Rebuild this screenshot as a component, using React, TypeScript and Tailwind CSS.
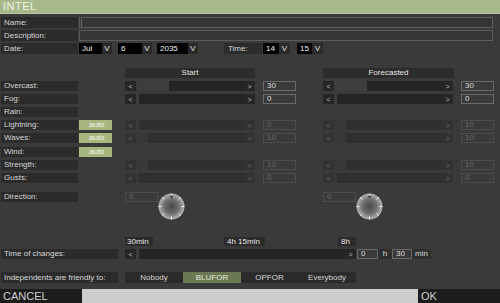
import React from "react";

const FONT = { fontFamily: '"Liberation Sans", Arial, sans-serif' };

function Label({ children, w = "w-[77px]" }: { children: React.ReactNode; w?: string }) {
  return (
    <div className={`${w} ml-[1px] h-full bg-[#2b2b2b] text-[#d6d6d6] pl-[3px] flex items-center text-[8px] leading-none`}>
      {children}
    </div>
  );
}

function Btn({ children, dim }: { children: React.ReactNode; dim?: boolean }) {
  return (
    <div
      className={`w-[11px] h-full flex items-center justify-center text-[7px] leading-none ${
        dim ? "bg-[#323232] text-[#6e6e6e]" : "bg-[#262626] text-[#b8b8b8]"
      }`}
    >
      {children}
    </div>
  );
}

function Track({ value, dim, w = 107 }: { value: number; dim?: boolean; w?: number }) {
  const fill = Math.max(2, Math.round((value / 100) * w));
  return (
    <div className={`ml-[1px] h-full flex ${dim ? "bg-[#2f2f2f]" : "bg-[#242424]"}`} style={{ width: w }}>
      <div className={`h-full ${dim ? "bg-[#383838]" : "bg-[#3e3e3e]"}`} style={{ width: fill }} />
    </div>
  );
}

function ValBox({ v, dim, ml }: { v: string; dim?: boolean; ml: string }) {
  return (
    <div
      className={`${ml} w-[33px] h-full border flex items-center pl-[3px] text-[8px] leading-none ${
        dim ? "border-[#4c4c4c] text-[#6a6a6a]" : "border-[#6a6a6a] text-[#dcdcdc]"
      }`}
    >
      {v}
    </div>
  );
}

function Slider({ value, dim }: { value: number; dim?: boolean }) {
  return (
    <div className="flex h-full">
      <Btn dim={dim}>&lt;</Btn>
      <Track value={value} dim={dim} />
      <Btn dim={dim}>&gt;</Btn>
    </div>
  );
}

function WeatherRow({
  label,
  auto,
  s,
  f,
  dim,
  mt = "mt-[3px]",
}: {
  label: string;
  auto?: boolean;
  s?: number;
  f?: number;
  dim?: boolean;
  mt?: string;
}) {
  return (
    <div className={`flex h-[10px] ${mt}`}>
      <div className="w-[125px] flex h-full">
        <Label>{label}</Label>
        {auto && (
          <div className="ml-[1px] w-[33px] h-full bg-[#a7b67e] text-[#f4f7ec] flex items-center pl-[10px] text-[8px] leading-none">
            auto
          </div>
        )}
      </div>
      {s !== undefined && f !== undefined && (
        <>
          <Slider value={s} dim={dim} />
          <ValBox v={String(s)} dim={dim} ml="ml-[8px]" />
          <div className="ml-[27px] h-full">
            <Slider value={f} dim={dim} />
          </div>
          <ValBox v={String(f)} dim={dim} ml="ml-[8px]" />
        </>
      )}
    </div>
  );
}

function Combo({ v, bw, vw, ml }: { v: string; bw: string; vw: string; ml: string }) {
  return (
    <div className={`${ml} flex h-full`}>
      <div className={`${bw} h-full bg-black text-[#f0f0f0] flex items-center pl-[3px] text-[8px] leading-none`}>{v}</div>
      <div className={`${vw} h-full bg-[#2a2a2a] text-[#e0e0e0] flex items-center justify-center text-[8px] leading-none`}>V</div>
    </div>
  );
}

function Compass() {
  const ticks = [45, 90, 135, 180, 225, 270, 315];
  return (
    <svg width="27" height="27" viewBox="0 0 27 27">
      <defs>
        <radialGradient id="cg" cx="50%" cy="50%" r="50%">
          <stop offset="0%" stopColor="#4a4a4a" />
          <stop offset="55%" stopColor="#6e6e6e" />
          <stop offset="100%" stopColor="#b4b4b4" />
        </radialGradient>
      </defs>
      <circle cx="13.5" cy="13.5" r="13" fill="url(#cg)" />
      {ticks.map((a) => {
        const r = (a * Math.PI) / 180;
        const x1 = 13.5 + Math.sin(r) * 13;
        const y1 = 13.5 - Math.cos(r) * 13;
        const x2 = 13.5 + Math.sin(r) * 10;
        const y2 = 13.5 - Math.cos(r) * 10;
        return <line key={a} x1={x1} y1={y1} x2={x2} y2={y2} stroke="#f2f2f2" strokeWidth="1" />;
      })}
      <line x1="13.5" y1="0.8" x2="13.5" y2="2.5" stroke="#f2f2f2" strokeWidth="1" />
      <circle cx="13.5" cy="3.8" r="1" fill="#111" />
    </svg>
  );
}

export default function App() {
  return (
    <div className="w-[500px] h-[303px] flex flex-col overflow-hidden" style={FONT}>
      <div className="h-[13px] bg-[#a7b98a] text-[#eef3e4] text-[11px] leading-[13px] pl-[3px] tracking-[0.5px]">INTEL</div>
      <div className="h-[1px] bg-[#b9c6a4]" />
      <div className="flex-1 bg-[#3a3a3b] flex flex-col">
        {/* Name */}
        <div className="flex h-[11px] mt-[3px]">
          <Label>Name:</Label>
          <div className="ml-[1px] w-[414px] h-full border border-[#5c5c5c] bg-[#353535] flex items-center pl-[1px]">
            <div className="w-[1px] h-[8px] bg-[#6a6a6a]" />
          </div>
        </div>
        {/* Description */}
        <div className="flex h-[11px] mt-[2px]">
          <Label>Description:</Label>
          <div className="ml-[1px] w-[414px] h-full border border-[#5c5c5c] bg-[#353535]" />
        </div>
        {/* Date */}
        <div className="flex h-[11px] mt-[2px]">
          <Label>Date:</Label>
          <Combo v="Jul" bw="w-[23px]" vw="w-[10px]" ml="ml-[1px]" />
          <Combo v="6" bw="w-[24px]" vw="w-[10px]" ml="ml-[6px]" />
          <Combo v="2035" bw="w-[31px]" vw="w-[10px]" ml="ml-[5px]" />
          <div className="ml-[26px] w-[38px] h-full bg-[#2b2b2b] text-[#d6d6d6] pl-[4px] flex items-center text-[8px] leading-none">
            Time:
          </div>
          <Combo v="14" bw="w-[16px]" vw="w-[11px]" ml="ml-[1px]" />
          <Combo v="15" bw="w-[15px]" vw="w-[11px]" ml="ml-[7px]" />
        </div>
        {/* Headers */}
        <div className="flex h-[10px] mt-[14px]">
          <div className="ml-[125px] w-[130px] h-full bg-[#2c2c2c] text-[#e6e6e6] flex items-center justify-center text-[8px] leading-none">
            Start
          </div>
          <div className="ml-[68px] w-[131px] h-full bg-[#2c2c2c] text-[#e6e6e6] flex items-center justify-center text-[8px] leading-none">
            Forecasted
          </div>
        </div>
        <WeatherRow label="Overcast:" s={30} f={30} />
        <WeatherRow label="Fog:" s={0} f={0} />
        <WeatherRow label="Rain:" />
        <WeatherRow label="Lightning:" auto s={0} f={10} dim />
        <WeatherRow label="Waves:" auto s={10} f={10} dim />
        <WeatherRow label="Wind:" auto mt="mt-[4px]" />
        <WeatherRow label="Strength:" s={10} f={10} dim />
        <WeatherRow label="Gusts:" s={0} f={0} dim />
        {/* Direction */}
        <div className="flex h-[27px] mt-[9px] items-start">
          <div className="w-[125px] flex h-[10px]">
            <Label>Direction:</Label>
          </div>
          <div className="w-[33px] h-[10px] border border-[#4c4c4c] text-[#6a6a6a] flex items-center pl-[3px] text-[8px] leading-none">
            0
          </div>
          <div className="mt-[1px]">
            <Compass />
          </div>
          <div className="ml-[138px] w-[33px] h-[10px] border border-[#4c4c4c] text-[#6a6a6a] flex items-center pl-[3px] text-[8px] leading-none">
            0
          </div>
          <div className="mt-[1px]">
            <Compass />
          </div>
        </div>
        {/* Time labels */}
        <div className="flex h-[9px] mt-[18px]">
          <div className="ml-[125px] w-[28px] h-full bg-[#2b2b2b] text-[#e6e6e6] flex items-center pl-[2px] text-[8px] leading-none">
            30min
          </div>
          <div className="ml-[71px] w-[41px] h-full bg-[#2b2b2b] text-[#e6e6e6] flex items-center pl-[3px] text-[8px] leading-none">
            4h 15min
          </div>
          <div className="ml-[73px] w-[18px] h-full bg-[#2b2b2b] text-[#e6e6e6] flex items-center pl-[3px] text-[8px] leading-none">
            8h
          </div>
        </div>
        {/* Time of changes */}
        <div className="flex h-[10px] mt-[3px]">
          <div className="w-[125px] flex h-full">
            <Label w="w-[117px]">Time of changes:</Label>
          </div>
          <Btn>&lt;</Btn>
          <Track value={0} w={208} />
          <Btn>&gt;</Btn>
          <div className="ml-[1px] w-[21px] h-full border border-[#6a6a6a] text-[#dcdcdc] flex items-center pl-[3px] text-[8px] leading-none">
            0
          </div>
          <div className="w-[14px] h-full bg-[#2f2f2f] text-[#dcdcdc] flex items-center justify-center text-[8px] leading-none">h</div>
          <div className="w-[20px] h-full border border-[#6a6a6a] text-[#dcdcdc] flex items-center pl-[3px] text-[8px] leading-none">
            30
          </div>
          <div className="w-[19px] h-full bg-[#2f2f2f] text-[#dcdcdc] flex items-center justify-center text-[8px] leading-none">min</div>
        </div>
        {/* Independents */}
        <div className="flex h-[11px] mt-[13px]">
          <div className="w-[125px] flex h-full">
            <Label w="w-[117px]">Independents are friendly to:</Label>
          </div>
          <div className="w-[58px] h-full bg-[#2b2b2b] text-[#d6d6d6] flex items-center justify-center text-[8px] leading-none">Nobody</div>
          <div className="w-[58px] h-full bg-[#6b7856] text-[#e4e8d8] flex items-center justify-center text-[8px] leading-none">BLUFOR</div>
          <div className="w-[57px] h-full bg-[#2b2b2b] text-[#d6d6d6] flex items-center justify-center text-[8px] leading-none">OPFOR</div>
          <div className="w-[58px] h-full bg-[#2b2b2b] text-[#d6d6d6] flex items-center justify-center text-[8px] leading-none">Everybody</div>
        </div>
      </div>
      {/* Bottom */}
      <div className="h-[14px] bg-[#cdcdcd] flex justify-between">
        <div className="w-[82px] h-full bg-[#1c1c1c] text-[#cfcfcf] text-[11px] leading-[14px] pl-[3px]">CANCEL</div>
        <div className="w-[82px] h-full bg-[#1c1c1c] text-[#cfcfcf] text-[11px] leading-[14px] pl-[3px]">OK</div>
      </div>
    </div>
  );
}
